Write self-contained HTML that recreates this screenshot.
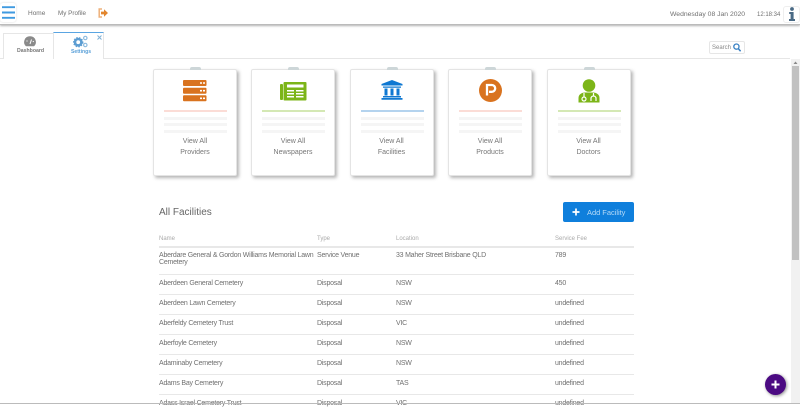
<!DOCTYPE html>
<html>
<head>
<meta charset="utf-8">
<style>
html,body{margin:0;padding:0;width:800px;height:404px;overflow:hidden;background:#fff;font-family:"Liberation Sans",sans-serif;color:#777}
#w{position:absolute;left:0;top:0;width:800px;height:404px;filter:blur(.25px)}
.a{position:absolute;white-space:nowrap}
#top{position:absolute;left:0;top:0;width:800px;height:24px;background:#fff;border-bottom:1px solid #bbb;box-shadow:0 1px 2px rgba(0,0,0,.3)}
.card{position:absolute;top:69px;width:84px;height:107px;background:#fff;border-radius:2px;border:1px solid #e4e4e4;box-sizing:border-box;box-shadow:2px 2px 3px rgba(90,90,90,.45)}
.clip{position:absolute;left:36px;top:-3px;width:11px;height:3px;background:#cdd6d8;border-radius:2px 2px 0 0}
.l{position:absolute;left:10px;width:63px;height:2px}
.g{background:#f5f5f5;height:3px}
.t{position:absolute;left:0;width:82px;text-align:center;font-size:7px;color:#777}
.ic{position:absolute}
.c{font-size:7px;color:#707070;position:absolute;white-space:nowrap;letter-spacing:-.22px}
.d{position:absolute;left:159px;width:475px;height:1px;background:#e8e8e8}
.h{font-size:6px;color:#aaa;position:absolute;top:236px;white-space:nowrap}
</style>
</head>
<body>
<div id="w">
<div id="top"></div>

<div class="a" style="left:0;top:3px;width:16px;height:19px;background:#fff;border-radius:3px;box-shadow:0 0 2px rgba(0,0,0,.15)"></div>
<svg class="a" style="left:2px;top:6px" width="13" height="13"><path d="M0 1.200H13M0 6.500H13M0 11.800H13" stroke="#3f9ae0" stroke-width="1.900"/></svg>
<div class="a" style="left:28px;top:10px;font-size:6.500px;color:#707070">Home</div>
<div class="a" style="left:58px;top:10px;font-size:6.300px;color:#707070">My Profile</div>
<svg class="a" style="left:98px;top:8px" width="10" height="10" viewBox="0 0 10 10"><path d="M4 1H1.200V9H4" fill="none" stroke="#eeb07a" stroke-width="1.500"/><path d="M3 3.600H6V1.200L10 5L6 8.800V6.400H3Z" fill="#e2862e"/></svg>

<div class="a" style="left:670px;top:11px;font-size:6.800px;color:#707070">Wednesday 08 Jan 2020</div>
<div class="a" style="left:757px;top:11.500px;font-size:6px;color:#707070">12:18:34</div>
<div class="a" style="left:783px;top:6px;width:17px;height:17px;background:#fff;border:1px solid #eee;border-radius:3px;box-sizing:border-box"></div>
<svg class="a" style="left:788px;top:7px" width="8" height="14" viewBox="0 0 8 14"><circle cx="4" cy="2" r="1.900" fill="#4a6a85"/><path d="M1.200 5H5.600V12H7V14H1V12H2.600V7H1.200Z" fill="#4a6a85"/></svg>

<div class="a" style="left:0;top:58px;width:790px;height:1px;background:#e6e6e6"></div>
<div class="a" style="left:3px;top:33px;width:51px;height:26px;background:#fff;border:1px solid #e6e6e6;border-bottom:0;box-sizing:border-box"></div>
<div class="a" style="left:53px;top:32px;width:51px;height:27px;background:#fff;border:1px solid #e6e6e6;border-top:1px solid #5aa5e2;border-bottom:0;box-sizing:border-box"></div>
<svg class="a" style="left:24px;top:36px" width="12" height="11" viewBox="0 0 12 11"><path d="M6 .3A5.700 5.700 0 0 0 2 10.200H10A5.700 5.700 0 0 0 6 .3Z" fill="#8a8a8a"/><path d="M6 8L7.500 3.500" stroke="#fff" stroke-width="1"/><circle cx="3" cy="5" r=".6" fill="#fff"/><circle cx="9.300" cy="5.500" r=".6" fill="#fff"/></svg>
<div class="a" style="left:17px;top:48px;font-size:5.200px;font-weight:bold;color:#777">Dashboard</div>
<svg class="a" style="left:73px;top:35px" width="15" height="13" viewBox="0 0 15 13"><circle cx="5.200" cy="7.200" r="3.200" fill="none" stroke="#5c9dd2" stroke-width="2.600"/><circle cx="5.200" cy="7.200" r="4.600" fill="none" stroke="#5c9dd2" stroke-width="1.200" stroke-dasharray="1.400 1.400"/><circle cx="12.300" cy="3" r="1.700" fill="none" stroke="#8dbbdf" stroke-width="1.200"/><circle cx="12.300" cy="10" r="1.700" fill="none" stroke="#8dbbdf" stroke-width="1.200"/></svg>
<div class="a" style="left:71px;top:48.500px;font-size:5.100px;font-weight:bold;color:#5aa0d8">Settings</div>
<svg class="a" style="left:97px;top:35px" width="5" height="5"><path d="M.5 .5L4.500 4.500M4.500 .5L.5 4.500" stroke="#7fb0d6" stroke-width="1"/></svg>

<div class="a" style="left:709px;top:41px;width:36px;height:13px;background:#fff;border:1px solid #e6e6e6;border-radius:2px;box-sizing:border-box"></div>
<div class="a" style="left:712px;top:44.500px;font-size:6px;color:#888">Search</div>
<svg class="a" style="left:733px;top:43px" width="8" height="9" viewBox="0 0 8 9"><circle cx="3.400" cy="3.600" r="2.600" fill="none" stroke="#3b82c4" stroke-width="1.300"/><path d="M5.200 5.500L7.600 8.200" stroke="#3b82c4" stroke-width="1.500"/></svg>

<div class="a" style="left:791px;top:59px;width:9px;height:345px;background:#f1f1f1"></div>
<div class="a" style="left:792px;top:66px;width:7px;height:194px;background:#c1c1c1"></div>
<svg class="a" style="left:793px;top:61px" width="5" height="4"><path d="M2.500 .5L4.500 3H.5Z" fill="#888"/></svg>

<div class="card" style="left:153px"><div class="clip"></div>
<svg class="ic" style="left:29px;top:10px" width="24" height="22" viewBox="0 0 24 22"><rect y="0" width="23.500" height="6" rx="1" fill="#d9731f"/><rect y="7.700" width="23.500" height="6" rx="1" fill="#d9731f"/><rect y="15.300" width="23.500" height="6" rx="1" fill="#d9731f"/><path d="M17 2.200h2v1.600h-2zM20 2.200h2v1.600h-2zM17 9.900h2v1.600h-2zM20 9.900h2v1.600h-2zM17 17.500h2v1.600h-2zM20 17.500h2v1.600h-2z" fill="#fff"/></svg>
<div class="l" style="top:40px;background:#fbdcd6"></div><div class="l g" style="top:47px"></div><div class="l g" style="top:53px"></div><div class="l g" style="top:60px"></div>
<div class="t" style="top:68px">View All</div><div class="t" style="top:78.500px">Providers</div></div>

<div class="card" style="left:251px"><div class="clip"></div>
<svg class="ic" style="left:28px;top:12px" width="27" height="21" viewBox="0 0 27 21"><rect x="0" y="2" width="3" height="16" rx="1" fill="#7cb518"/><rect x="3.500" y="0" width="23" height="18.500" rx="1" fill="#7cb518"/><path d="M7 2.500H23.500V5.500H7ZM7 8H14V9.500H7ZM16 8H23.500V9.500H16ZM7 11H14V12.500H7ZM16 11H23.500V12.500H16ZM7 14H14V15.500H7ZM16 14H23.500V15.500H16Z" fill="#fff"/></svg>
<div class="l" style="top:40px;background:#d4e8b4"></div><div class="l g" style="top:47px"></div><div class="l g" style="top:53px"></div><div class="l g" style="top:60px"></div>
<div class="t" style="top:68px">View All</div><div class="t" style="top:78.500px">Newspapers</div></div>

<div class="card" style="left:349.500px"><div class="clip"></div>
<svg class="ic" style="left:30px;top:10px" width="22" height="20" viewBox="0 0 22 20"><path d="M11 0L21.500 4V5.500H.5V4Z" fill="#0f78d2"/><path d="M2 6.500H20V7.800H2ZM3.500 8.500H6.500V15.500H3.500ZM9.500 8.500H12.500V15.500H9.500ZM15.500 8.500H18.500V15.500H15.500ZM2 16H20V17.500H2ZM.5 18H21.500V19.800H.5Z" fill="#0f78d2"/></svg>
<div class="l" style="top:40px;background:#b4d3ee"></div><div class="l g" style="top:47px"></div><div class="l g" style="top:53px"></div><div class="l g" style="top:60px"></div>
<div class="t" style="top:68px">View All</div><div class="t" style="top:78.500px">Facilities</div></div>

<div class="card" style="left:448px"><div class="clip"></div>
<div class="ic" style="left:30px;top:9px;width:23px;height:23px;border-radius:50%;background:#d9731f"></div>
<svg class="ic" style="left:30px;top:9px" width="23" height="23" viewBox="0 0 23 23"><path d="M8 16.500V6H12.800A3.400 3.400 0 0 1 12.800 12.800H10" fill="none" stroke="#fff" stroke-width="2.300"/></svg>
<div class="l" style="top:40px;background:#fbdcd6"></div><div class="l g" style="top:47px"></div><div class="l g" style="top:53px"></div><div class="l g" style="top:60px"></div>
<div class="t" style="top:68px">View All</div><div class="t" style="top:78.500px">Products</div></div>

<div class="card" style="left:546.500px"><div class="clip"></div>
<svg class="ic" style="left:30px;top:9px" width="22" height="24" viewBox="0 0 22 24"><circle cx="11" cy="6.500" r="6.300" fill="#7cb518"/><path d="M.5 23.500V19C.5 15.500 3.500 13.500 7 13.500H15C18.500 13.500 21.500 15.500 21.500 19V23.500Z" fill="#7cb518"/><path d="M6 14V18" stroke="#fff" stroke-width="1.200"/><circle cx="6" cy="20" r="2" fill="none" stroke="#fff" stroke-width="1.200"/><path d="M13 22V19.500A2.500 2.500 0 0 1 18 19.500V22M15.500 14V17" fill="none" stroke="#fff" stroke-width="1.200"/></svg>
<div class="l" style="top:40px;background:#d4e8b4"></div><div class="l g" style="top:47px"></div><div class="l g" style="top:53px"></div><div class="l g" style="top:60px"></div>
<div class="t" style="top:68px">View All</div><div class="t" style="top:78.500px">Doctors</div></div>

<div class="a" style="left:159px;top:207px;font-size:10px;color:#666">All Facilities</div>
<div class="a" style="left:563px;top:202px;width:71px;height:20px;background:#0f7fdc;border-radius:2px"></div>
<svg class="a" style="left:572px;top:208px" width="8" height="8"><path d="M4 .5V7.500M.5 4H7.500" stroke="#fff" stroke-width="1.700"/></svg>
<div class="a" style="left:587px;top:208px;font-size:7.500px;color:#b5daf7;letter-spacing:-.03px">Add Facility</div>

<div class="h" style="left:159px">Name</div><div class="h" style="left:317px">Type</div><div class="h" style="left:396px">Location</div><div class="h" style="left:555px">Service Fee</div>
<div class="d" style="top:246px;height:2px"></div>

<div class="c" style="left:159px;top:252px">Aberdare General &amp; Gordon Williams Memorial Lawn</div>
<div class="c" style="left:159px;top:258.500px">Cemetery</div>
<div class="c" style="left:317px;top:252px">Service Venue</div><div class="c" style="left:396px;top:252px">33 Maher Street Brisbane QLD</div><div class="c" style="left:555px;top:252px">789</div>
<div class="d" style="top:274px"></div>

<div class="c" style="left:159px;top:279.500px">Aberdeen General Cemetery</div><div class="c" style="left:317px;top:279.500px">Disposal</div><div class="c" style="left:396px;top:279.500px">NSW</div><div class="c" style="left:555px;top:279.500px">450</div>
<div class="d" style="top:294px"></div>

<div class="c" style="left:159px;top:299.500px">Aberdeen Lawn Cemetery</div><div class="c" style="left:317px;top:299.500px">Disposal</div><div class="c" style="left:396px;top:299.500px">NSW</div><div class="c" style="left:555px;top:299.500px">undefined</div>
<div class="d" style="top:314px"></div>

<div class="c" style="left:159px;top:319.500px">Aberfeldy Cemetery Trust</div><div class="c" style="left:317px;top:319.500px">Disposal</div><div class="c" style="left:396px;top:319.500px">VIC</div><div class="c" style="left:555px;top:319.500px">undefined</div>
<div class="d" style="top:334px"></div>

<div class="c" style="left:159px;top:339.500px">Aberfoyle Cemetery</div><div class="c" style="left:317px;top:339.500px">Disposal</div><div class="c" style="left:396px;top:339.500px">NSW</div><div class="c" style="left:555px;top:339.500px">undefined</div>
<div class="d" style="top:354px"></div>

<div class="c" style="left:159px;top:359.500px">Adaminaby Cemetery</div><div class="c" style="left:317px;top:359.500px">Disposal</div><div class="c" style="left:396px;top:359.500px">NSW</div><div class="c" style="left:555px;top:359.500px">undefined</div>
<div class="d" style="top:374px"></div>

<div class="c" style="left:159px;top:379.500px">Adams Bay Cemetery</div><div class="c" style="left:317px;top:379.500px">Disposal</div><div class="c" style="left:396px;top:379.500px">TAS</div><div class="c" style="left:555px;top:379.500px">undefined</div>
<div class="d" style="top:394px"></div>

<div class="c" style="left:159px;top:399.500px">Adass Israel Cemetery Trust</div><div class="c" style="left:317px;top:399.500px">Disposal</div><div class="c" style="left:396px;top:399.500px">VIC</div><div class="c" style="left:555px;top:399.500px">undefined</div>

<div class="a" style="left:765px;top:374px;width:21px;height:21px;border-radius:50%;background:#4b0a82;box-shadow:1px 1px 3px rgba(0,0,0,.45)"></div>
<svg class="a" style="left:771px;top:380px" width="9" height="9"><path d="M4.500 .5V8.500M.5 4.500H8.500" stroke="#fff" stroke-width="2"/></svg>

<div class="a" style="left:0;top:403px;width:800px;height:1px;background:#bbb"></div>
</div>
</body>
</html>
